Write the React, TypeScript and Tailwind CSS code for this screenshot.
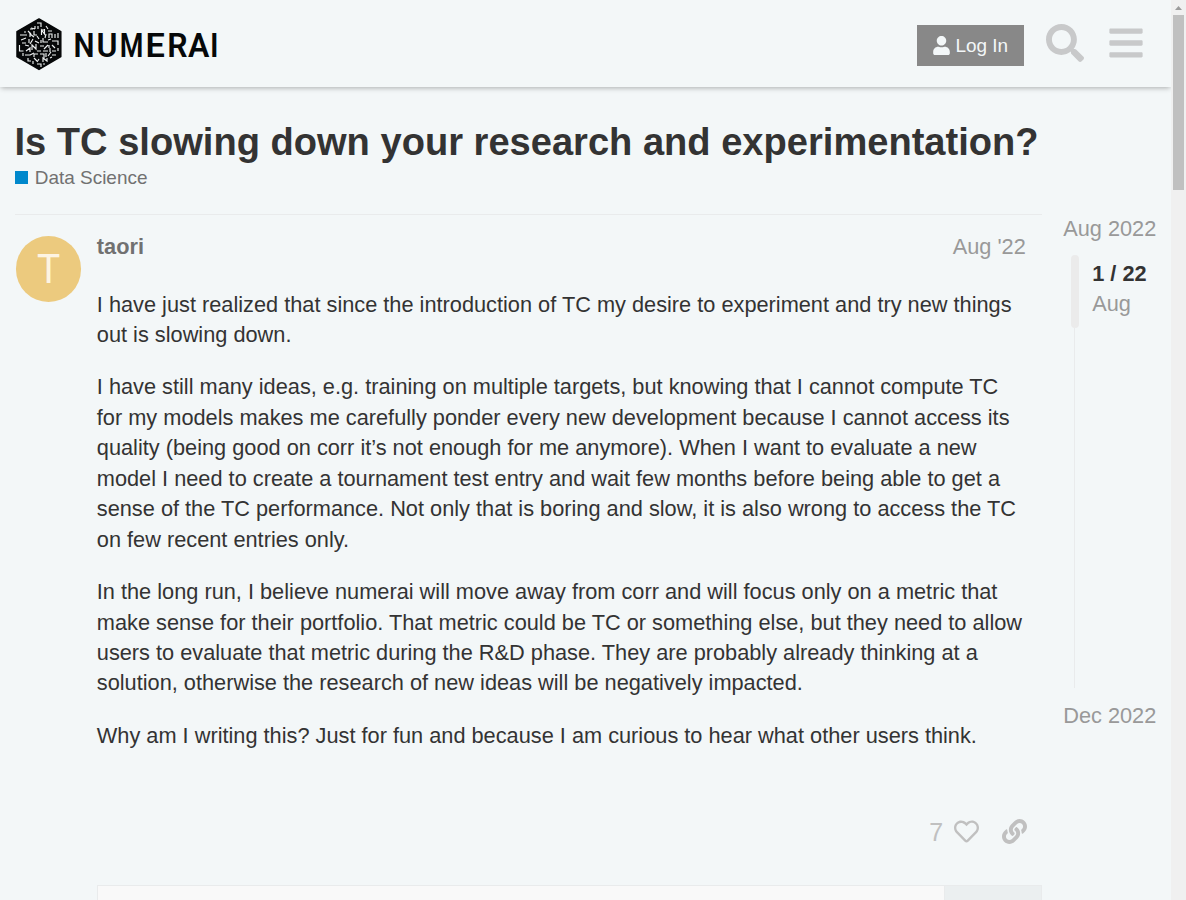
import { FaBars, FaLink, FaRegHeart, FaSearch, FaUser } from "react-icons/fa";

const paragraphs: string[][] = [
  [
    "I have just realized that since the introduction of TC my desire to experiment and try new things",
    "out is slowing down.",
  ],
  [
    "I have still many ideas, e.g. training on multiple targets, but knowing that I cannot compute TC",
    "for my models makes me carefully ponder every new development because I cannot access its",
    "quality (being good on corr it’s not enough for me anymore). When I want to evaluate a new",
    "model I need to create a tournament test entry and wait few months before being able to get a",
    "sense of the TC performance. Not only that is boring and slow, it is also wrong to access the TC",
    "on few recent entries only.",
  ],
  [
    "In the long run, I believe numerai will move away from corr and will focus only on a metric that",
    "make sense for their portfolio. That metric could be TC or something else, but they need to allow",
    "users to evaluate that metric during the R&D phase. They are probably already thinking at a",
    "solution, otherwise the research of new ideas will be negatively impacted.",
  ],
  ["Why am I writing this? Just for fun and because I am curious to hear what other users think."],
];

const wordmark = [
  { letter: "N", x: 58.4, scale: 0.9 },
  { letter: "U", x: 81.5, scale: 0.97 },
  { letter: "M", x: 104.8, scale: 0.82 },
  { letter: "E", x: 130.4, scale: 1.04 },
  { letter: "R", x: 152.2, scale: 0.97 },
  { letter: "A", x: 173, scale: 0.97 },
  { letter: "I", x: 194.900, scale: 0.9 },
];

function Logo() {
  return (
    <svg width="206" height="56" viewBox="0 0 206 56" className="block" role="img" aria-label="Numerai">
      <path
        d="M24 3 L45.8 15.6 V40.6 L24 53.4 L2 40.6 V15.6 Z"
        fill="#060809"
        stroke="#060809"
        strokeWidth="1.5"
        strokeLinejoin="round"
      />
      <g stroke="#eef1f2" strokeWidth="1.15" fill="none">
        <path d="M22 7h4v4M20 10v3M16 12l4 1M28 13v2M31 10l2 3M23 10v3" />
        <path d="M13 15l3 3M19 15v4h3M26.500 19v-5l3 4v-5M33 15h4M11 16h-2M15 13h3" />
        <path d="M5 19h7M15 21v-3l4 3M22 20l2 3M34 22v-4h3v4M40 18v4M31 18l-1 4M43 17v5" />
        <path d="M6 24l5-2M14 23v4M18 23l-3 5M20 25l4 2M28 22v4h5M37 25h6v4M26 24v3M33 24l3-1" />
        <path d="M4.500 29v6h4M10 29l4 1M17 34v-5l4 4v-5M25 30h4M33 29l-4 4M37 29l3 3M43 32v3M7 27h4M34 29v3" />
        <path d="M11 35l4-3v4M22 35h4M28 35h5M35 32v4M10 39h5M19 37l-4 2M8 37v3M37 35h4" />
        <path d="M19 41v-3h4M25 38h4v4M33 40l3-4M37 39h4M13 42v3h3M19 42l3 3M31 37v4" />
        <path d="M24 43l-2 3M28 46v-4l4 3v-3M22 48h4v3M18 45v3M35 42l2-1M28 48h2" />
      </g>
      <g className="fill-[#060809] font-[Roboto,sans-serif] text-[33px] font-semibold">
        {wordmark.map(({ letter, x, scale }) => (
          <text key={letter} transform={`translate(${x} 40.5) scale(${scale} 1)`}>
            {letter}
          </text>
        ))}
      </g>
    </svg>
  );
}

function Header() {
  return (
    <header className="flex h-[87px] shrink-0 items-start bg-[#f3f7f8] pl-[15px] shadow-[0_2px_5px_-1px_rgba(0,0,0,0.3)]">
      <div className="mt-4">
        <Logo />
      </div>
      <button className="mt-[25px] ml-auto flex h-[41px] w-[107px] items-center gap-[5.5px] bg-[#888888] pl-4 text-[18.95px] text-[#f3f7f8]">
        <FaUser className="h-[19px] w-[17px] shrink-0" />
        <span className="pt-px whitespace-nowrap">Log In</span>
      </button>
      <FaSearch className="mt-6 ml-[22px] size-[38px] text-[#c8c9ca]" />
      <FaBars className="mt-6 mr-7 ml-[25px] h-[38px] w-[34px] text-[#c8c9ca]" />
    </header>
  );
}

function Post() {
  return (
    <article className="flex w-[1027.400px] shrink-0 border-t border-[#e9ebec]">
      <div className="mt-[21px] ml-[1.5px] flex h-[66px] w-[65px] shrink-0 justify-center rounded-full bg-[#ecca7e]">
        <span className="font-['Noto_Sans',sans-serif] text-[40px] leading-[63px] text-[#fdf4e3]">T</span>
      </div>
      <div className="ml-[15.8px] w-[945px] shrink-0">
        <div className="mt-4 flex h-[31px] items-center justify-between pr-4 leading-[31px]">
          <span className="font-bold text-[#717171]">taori</span>
          <span className="text-[#999999]">Aug '22</span>
        </div>
        <div className="mt-[27.6px] flex flex-col gap-[21.95px] leading-[30.46px] whitespace-nowrap text-[#333333]">
          {paragraphs.map((lines) => (
            <p key={lines[0]}>
              {lines.map((line) => (
                <span key={line} className="block">
                  {line}
                </span>
              ))}
            </p>
          ))}
        </div>
        <div className="mt-[61.3px] flex h-[38px] items-center justify-end pr-[14.700px] text-[#c0c0c0]">
          <span className="mr-[11px] pt-0.5 text-[25px]">7</span>
          <FaRegHeart className="mr-[23px] size-[25px]" />
          <FaLink className="size-[25px]" />
        </div>
        <div className="mt-[34px] flex h-[60px] border border-[#e9ebec] bg-[#f9f9f9]">
          <div className="ml-auto w-[97px] border-l border-[#e9ebec] bg-[#ebeff0]" />
        </div>
      </div>
    </article>
  );
}

function Timeline() {
  return (
    <aside className="ml-[21.3px] w-[107px] text-[#999999]">
      <div className="leading-[30px]">Aug 2022</div>
      <div className="mt-[11px] ml-2 flex h-[433px]">
        <div className="flex w-2 flex-col">
          <div className="h-[73px] rounded bg-[#ebebeb]" />
          <div className="ml-[3px] w-px grow bg-[#e9ebec]" />
        </div>
        <div className="mt-1 ml-[13px] leading-[30.4px]">
          <div className="font-bold text-[#333333]">1 / 22</div>
          <div>Aug</div>
        </div>
      </div>
      <div className="mt-[13px] leading-[30px]">Dec 2022</div>
    </aside>
  );
}

function Scrollbar() {
  return (
    <div className="flex w-[15px] shrink-0 flex-col items-center bg-[#f0f0f0]">
      <svg width="15" height="15" className="shrink-0">
        <path d="M4 10 L7.5 6 L11 10 Z" fill="#9b9b9b" />
      </svg>
      <div className="h-[175px] w-[11px] bg-[#c0c0c0]" />
    </div>
  );
}

export default function App() {
  return (
    <div className="flex h-[900px] w-[1186px] overflow-hidden bg-[#f3f7f8] font-['Liberation_Sans',Arial,sans-serif] text-[21.75px]">
      <div className="flex w-[1171px] shrink-0 flex-col overflow-hidden">
        <Header />
        <main className="pl-[14.500px]">
          <h1 className="mt-8 text-[38.1px] leading-[46px] font-bold whitespace-nowrap text-[#333333]">
            Is TC slowing down your research and experimentation?
          </h1>
          <div className="flex h-[26px] items-center text-[18.95px] text-[#717171]">
            <span className="mr-[7.3px] mb-px size-[13px] bg-[#0088cc]" />
            Data Science
          </div>
          <div className="mt-[23px] flex items-start">
            <Post />
            <Timeline />
          </div>
        </main>
      </div>
      <Scrollbar />
    </div>
  );
}
